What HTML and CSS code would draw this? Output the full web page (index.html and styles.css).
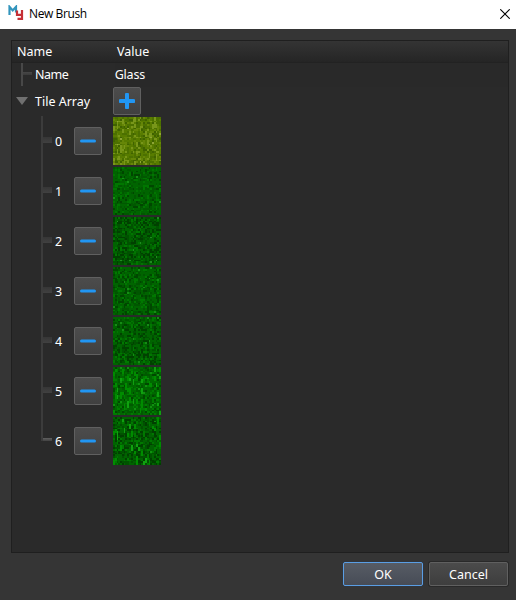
FILE: index.html
```html
<!DOCTYPE html>
<html lang="en">
<head>
<meta charset="utf-8">
<title>New Brush</title>
<link rel="stylesheet" href="styles.css">
</head>
<body>
<div class="window">
  <header class="titlebar">
    <svg class="logo" width="16" height="16" viewBox="0 0 16 16" fill="none" stroke-width="2.2">
      <path d="M1.5 10V1.8L4.7 5.4L8 1.8V7.5" stroke="#3295bd"/>
      <path d="M9 5.5v4.3h5M14 5v8.8h-4.5" stroke="#c52f35"/>
    </svg>
    <span class="title">New Brush</span>
    <svg class="close" width="10" height="10" viewBox="0 0 10 10"><path d="M.3.3l9.4 9.4M9.7.3L.3 9.7" stroke="#000" stroke-width="1.1"/></svg>
  </header>
  <main class="tree">
    <div class="head"><span class="head-name">Name</span><span>Value</span></div>
    <div class="row name-row"><i class="branch"></i><span class="label">Name</span><span class="value">Glass</span></div>
    <div class="row array-row"><i class="arrow"></i><span class="label">Tile Array</span><button class="tool"><svg width="16" height="16" viewBox="0 0 16 16"><path d="M8 1.5v13M1.5 8h13" stroke="#2196f3" stroke-width="4" stroke-linecap="round"/></svg></button></div>
    <div id="tiles"></div>
  </main>
  <footer class="actions"><button class="action ok">OK</button><button class="action">Cancel</button></footer>
</div>
<script src="tiles.js"></script>
</body>
</html>
```
FILE: styles.css
```css
* { box-sizing: border-box; }
body { margin: 0; background: #353535; color: #fff; font: 12.5px/20px "Noto Sans", sans-serif; overflow: hidden; }
button { padding: 0; color: #fff; font: inherit; }
.window { width: 516px; height: 600px; display: flex; flex-direction: column; }
.titlebar { height: 29px; flex: none; background: #fff; color: #000; display: flex; align-items: center; padding: 0 6px 3px 8px; }
.logo { margin-top: 0; }
.title { margin-left: 5px; font: 12px/20px "Open Sans", sans-serif; flex: 1; padding-top: 2px; letter-spacing: -.4px; }
.close { margin-top: 1px; }
.tree { height: 513px; width: 498px; flex: none; margin: 11px 0 0 11px; border: 1px solid #1f1f1f; background: #2a2a2a; }
.head { height: 22px; display: flex; padding-left: 5px; line-height: 21px; background: linear-gradient(#343434, #252525); border-bottom: 1px solid #222; }
.head-name { width: 100px; }
.row { display: flex; }
.name-row { height: 24px; line-height: 23px; }
.branch { width: 11px; height: 23px; margin-left: 9px; border-left: 2px solid #484848; background: linear-gradient(#484848, #3a3a3a) 0 9px / 9px 3px no-repeat; }
.label { width: 80px; margin-left: 3px; letter-spacing: -.2px; }
.name-row .label { letter-spacing: -.5px; }
.value { width: 395px; background: #292929; letter-spacing: -.2px; }
.array-row { height: 29px; line-height: 29px; }
.arrow { width: 12px; height: 8px; margin: 10px 0 0 4px; background: #707070; clip-path: polygon(0 0, 100% 0, 50% 100%); }
.array-row .label { width: 78px; margin-left: 7px; letter-spacing: 0; }
.tool { width: 28px; height: 28px; flex: none; display: grid; place-items: center; border: 1px solid #606060; border-radius: 2px; background: linear-gradient(#4c4c4c, #404040); }
.tile-row { height: 50px; display: flex; align-items: center; }
.tile-branch { align-self: stretch; width: 11px; margin-left: 29px; border-left: 2px solid #3c3c3c; background: linear-gradient(#363636, #414141) 0 21px / 9px 6px no-repeat; }
.tile-row:last-child .tile-branch { align-self: flex-start; height: 25px; background: linear-gradient(#606060, #424242) 0 22px / 9px 3px no-repeat; }
.index { width: 19px; margin-left: 3px; padding-top: 2px; }
.tile { width: 48px; height: 48px; margin-left: 11px; image-rendering: pixelated; }
.actions { display: flex; justify-content: flex-end; gap: 6px; padding: 9px 8px 0 0; }
.action { width: 79px; height: 24px; border: 1px solid #606060; border-radius: 2px; background: linear-gradient(#4b4b4b, #3e3e3e); box-shadow: 0 0 0 1px #292929; line-height: 23px; }
.ok { width: 80px; border-color: #5a9ee4; background: linear-gradient(#575c65, #474c56); box-shadow: 0 0 0 1px #31353c; }
```
FILE: tiles.js
```javascript
// Each palette runs from shade to highlight, with the share of pixels per colour.
const palettes = [
  [['#3f6200', .12], ['#4c7000', .27], ['#587c00', .33], ['#668608', .18], ['#78961a', .08], ['#8ea536', .02]],
  [['#004600', .13], ['#005800', .2], ['#006400', .52], ['#007600', .14], ['#159015', .01]],
  [['#004000', .26], ['#005200', .24], ['#006300', .38], ['#007600', .11], ['#218a21', .01]],
  [['#004600', .17], ['#005600', .23], ['#006400', .45], ['#007800', .14], ['#168b16', .01]],
  [['#004200', .2], ['#005300', .24], ['#006400', .42], ['#007800', .13], ['#168b16', .01]],
  [['#004800', .11], ['#005a00', .23], ['#006800', .46], ['#007c00', .17], ['#109010', .03]],
  [['#004000', .25], ['#005200', .25], ['#006300', .37], ['#007800', .12], ['#109010', .01]]
];
const list = document.getElementById('tiles');
palettes.forEach((palette, index) => {
  const row = document.createElement('div');
  row.className = 'tile-row';
  row.innerHTML = `<i class="tile-branch"></i><span class="index">${index}</span><button class="tool"><svg width="16" height="4"><path d="M1.5 2h13" stroke="#2196f3" stroke-width="3" stroke-linecap="round"/></svg></button><canvas class="tile" width="27" height="27"></canvas>`;
  list.append(row);
  const ctx = row.querySelector('canvas').getContext('2d');
  let seed = 1379 + index * 7717;
  const random = () => {
    seed = (seed + 0x6d2b79f5) | 0;
    let t = Math.imul(seed ^ (seed >>> 15), 1 | seed);
    t ^= t + Math.imul(t ^ (t >>> 7), 61 | t);
    return ((t ^ (t >>> 14)) >>> 0) / 4294967296;
  };
  for (let y = 0; y < 27; y++) {
    for (let x = 0; x < 27; x++) {
      let n = random();
      const colour = palette.find(([, share]) => (n -= share) < 0) || palette[2];
      ctx.fillStyle = colour[0];
      ctx.fillRect(x, y, 1, 1);
    }
  }
  if (index === 0 || index > 4) {
    const count = index === 0 ? 30 : index === 5 ? 48 : 30;
    for (let i = 0; i < count; i++) {
      ctx.fillStyle = index === 0 ? '#78961a' : i % 3 ? '#008c00' : '#10a010';
      ctx.fillRect(Math.floor(random() * 27), Math.floor(random() * 26), 1, 2 + Math.floor(random() * 2));
    }
  }
});
```
